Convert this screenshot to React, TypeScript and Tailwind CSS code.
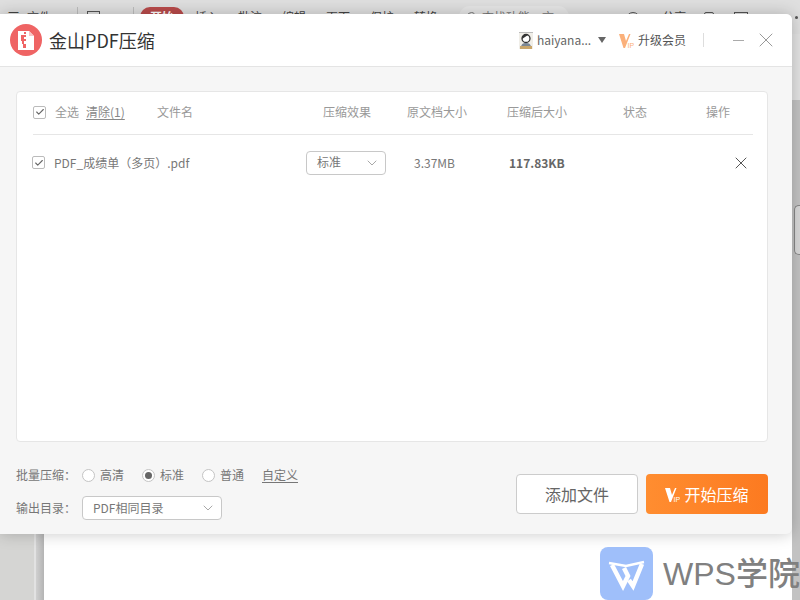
import { Check, ChevronDown, Search, X } from "lucide-react";

const font = { fontFamily: '"Noto Sans CJK SC", "Noto Sans", sans-serif' };

function Checkbox() {
  return (
    <span className="flex h-[13px] w-[13px] shrink-0 items-center justify-center rounded-[2px] border border-[#bbb] bg-white">
      <Check size={10} strokeWidth={2.6} className="text-[#666]" />
    </span>
  );
}

function Radio({ label, checked }: { label: string; checked?: boolean }) {
  return (
    <label className="flex w-[60px] items-center gap-[5px]">
      <span className="flex h-[13px] w-[13px] items-center justify-center rounded-full border border-[#c4c4c4] bg-white">
        {checked && <span className="h-[7px] w-[7px] rounded-full bg-[#666]" />}
      </span>
      <span>{label}</span>
    </label>
  );
}

function FakeSelect({ value, className }: { value: string; className: string }) {
  return (
    <div className={`flex h-6 items-center justify-between rounded-[4px] border border-[#c8c8c8] bg-white pr-[5px] text-[#777] ${className}`}>
      <span className="pb-px">{value}</span>
      <ChevronDown size={16} strokeWidth={1.1} className="text-[#888]" />
    </div>
  );
}

function PdfLogo() {
  return (
    <svg width="32" height="32" viewBox="0 0 32 32">
      <circle cx="16" cy="16" r="16" fill="#ef6464" />
      <path d="M8 7h11l5 5v14H8z" fill="#fff" />
      <path d="M19 7l5 5h-5z" fill="#f9c4c4" />
      <path d="M14 8h2v2h-2zM11 11h5v2h-3v2h3v2h-2v3h2v4h-3v-4h-1v-3h-1zM13 13h1v2h-1z" fill="#ef6464" />
    </svg>
  );
}

function VipMark({ color }: { color: string }) {
  return (
    <svg width="15" height="15" viewBox="0 0 15 15">
      <path d="M0 1h5l2 7 3-7h1.5L6 15H4.5z" fill={color} />
      <text x="8.6" y="14.5" fontSize="7" fontFamily="Liberation Sans" fill={color}>IP</text>
    </svg>
  );
}

function Avatar() {
  return (
    <svg width="14" height="17" viewBox="0 0 14 17">
      <rect width="14" height="17" fill="#f0eee8" />
      <rect x="0" y="0" width="14" height="1" fill="#bbb" />
      <circle cx="7" cy="6.5" r="4" fill="#fff" stroke="#333" strokeWidth="1.3" />
      <path d="M3 7a4 4 0 0 1 6-4l-3 2z" fill="#333" />
      <path d="M2 16c0-4 2-5 5-5s5 1 5 5z" fill="#7b8794" />
      <rect x="1" y="14" width="12" height="3" fill="#c9a66b" />
    </svg>
  );
}

function WpsMark() {
  return (
    <div className="h-[53px] w-[53px] rounded-[8px] bg-[#9fbffa]">
      <svg width="53" height="53" viewBox="0 0 53 53" fill="none" stroke="#fff" strokeWidth="4.5">
        <path d="M12 18l11 21 5-10-4-8" />
        <path d="M9 16l17 3 18-4" strokeWidth="2.5" />
        <path d="M42 17L33 39l-4-6" />
      </svg>
    </div>
  );
}

const tabs = ["批注", "编辑", "页面", "保护", "转换"];

export default function App() {
  return (
    <div className="relative flex h-[600px] w-[800px] flex-col overflow-hidden bg-white" style={font}>
      {/* document window behind the dialog */}
      <div className="flex h-[34px] items-center bg-[#dfdfdf] text-[12px] text-[#444]">
        <span className="ml-[7px] w-[20px] text-[13px]">三</span>
        <span className="w-[50px]">文件</span>
        <span className="h-[20px] w-px bg-[#bdbdbd]" />
        <span className="ml-[9px] h-[12px] w-[13px] border border-[#555]" />
        <span className="ml-[16px] w-[17px] text-[#777]">»</span>
        <span className="h-[20px] w-px bg-[#bdbdbd]" />
        <span className="ml-[6px] flex h-[20px] w-[44px] items-center justify-center rounded-[10px] bg-[#b94b4b] font-bold text-white">开始</span>
        <span className="ml-[11px] w-[43px]">插入</span>
        {tabs.map((t) => (
          <span key={t} className="w-[44px]">{t}</span>
        ))}
        <div className="ml-[1px] flex h-[22px] w-[110px] items-center gap-[4px] rounded-[11px] bg-[#e6e6e6] pl-[7px] text-[#777]">
          <Search size={12} />
          <span>查找功能、文</span>
        </div>
        <span className="ml-[57px] h-[10px] w-[14px] rounded-t-full border border-[#555]" />
        <span className="ml-[16px] w-[48px]">› 分享</span>
        <span className="h-[10px] w-[10px] rounded-[2px] border border-[#555]" />
        <span className="ml-[20px] h-[10px] w-[14px] border border-[#555]" />
        <span className="ml-[22px] h-[3px] w-[3px] rounded-full bg-[#555]" />
        <span className="ml-[22px] h-[3px] w-[3px] rounded-full bg-[#555]" />
      </div>
      <div className="flex flex-1">
        <div className="w-[34px] bg-[#d5d5d3]" />
        <div className="w-[2px] bg-[#e2e2e2]" />
        <div className="w-[8px] bg-gradient-to-r from-[#d0d0d0] to-[#b4b4b4]" />
        <div className="flex-1 bg-white" />
        <div className="flex w-[8px] flex-col bg-[#c2c2c2]">
          <div className="h-[66px] bg-[#e2e2e2]" />
          <div className="ml-[2px] mt-[105px] h-[50px] rounded-l-[5px] border border-r-0 border-[#888] bg-[#d8d8d8]" />
        </div>
      </div>

      {/* compress dialog */}
      <div className="absolute left-0 top-[14px] flex h-[520px] w-[792px] flex-col rounded-r-[6px] bg-[#f6f6f6] text-[12px] shadow-[0_0_16px_rgba(0,0,0,0.22)]">
        <header className="flex h-[53px] shrink-0 items-center rounded-tr-[6px] border-b border-[#e4e4e4] bg-white pl-[10px] pr-[14px]">
          <PdfLogo />
          <h1 className="ml-[7px] flex-1 text-[18px] font-normal text-[#333]">金山PDF压缩</h1>
          <Avatar />
          <span className="ml-[4px] w-[54px] whitespace-nowrap text-[12px] text-[#666]">haiyana...</span>
          <span className="ml-[7px] h-0 w-0 border-x-[4px] border-t-[6px] border-x-transparent border-t-[#666]" />
          <span className="ml-[13px] flex"><VipMark color="#fbb07a" /></span>
          <span className="ml-[4px] text-[#555]">升级会员</span>
          <span className="ml-[17px] h-[14px] w-px bg-[#ddd]" />
          <span className="ml-[29px] h-px w-[11px] bg-[#aaa]" />
          <X size={24} strokeWidth={1} className="ml-[10px] text-[#999]" />
        </header>

        <section className="ml-[16px] mr-[24px] mt-[24px] h-[351px] rounded-[4px] border border-[#e6e6e6] bg-white pl-[16px] pr-[14px]">
          <div className="grid h-[43px] grid-cols-[124px_166px_84px_100px_116px_83px_1fr] items-center border-b border-[#e6e6e6] pb-[2px] text-[#999]">
            <div className="flex items-center">
              <Checkbox />
              <span className="ml-[9px]">全选</span>
              <span className="ml-[7px] text-[#888] underline underline-offset-2">清除(1)</span>
            </div>
            <span>文件名</span>
            <span>压缩效果</span>
            <span>原文档大小</span>
            <span>压缩后大小</span>
            <span>状态</span>
            <span>操作</span>
          </div>
          <div className="-ml-px grid h-[55px] grid-cols-[274px_108px_95px_222px_1fr] items-center text-[#777]">
            <div className="flex items-center">
              <Checkbox />
              <span className="ml-[9px]">PDF_成绩单（多页）.pdf</span>
            </div>
            <FakeSelect value="标准" className="w-[80px] pl-[10px]" />
            <span>3.37MB</span>
            <span className="font-bold text-[#666]">117.83KB</span>
            <X size={20} strokeWidth={1.2} className="text-[#555]" />
          </div>
        </section>

        <footer className="flex items-start justify-between pl-[16px] pr-[24px] pt-[23px] text-[#777]">
          <div className="flex flex-col gap-[11px]">
            <div className="flex h-[20px] items-center">
              <span className="w-[66px]">批量压缩：</span>
              <Radio label="高清" />
              <Radio label="标准" checked />
              <Radio label="普通" />
              <span className="underline underline-offset-2">自定义</span>
            </div>
            <div className="flex items-center">
              <span className="w-[66px]">输出目录：</span>
              <FakeSelect value="PDF相同目录" className="w-[140px] pl-[10px]" />
            </div>
          </div>
          <div className="mt-[9px] flex gap-[8px] text-[16px]">
            <button className="h-[40px] w-[122px] rounded-[4px] border border-[#ccc] bg-white text-[#666]">添加文件</button>
            <button className="flex h-[40px] w-[122px] items-center justify-center gap-[4px] rounded-[4px] bg-gradient-to-r from-[#ff8d30] to-[#fc7a20] text-white">
              <VipMark color="#fff" />
              开始压缩
            </button>
          </div>
        </footer>
      </div>

      {/* watermark */}
      <div className="absolute left-[600px] top-[547px] flex items-center gap-[10px]">
        <WpsMark />
        <span className="whitespace-nowrap text-[32px] font-medium leading-none text-[#808080]" style={{ fontFamily: '"Liberation Sans", "Noto Sans CJK SC", sans-serif' }}>WPS学院</span>
      </div>
    </div>
  );
}
